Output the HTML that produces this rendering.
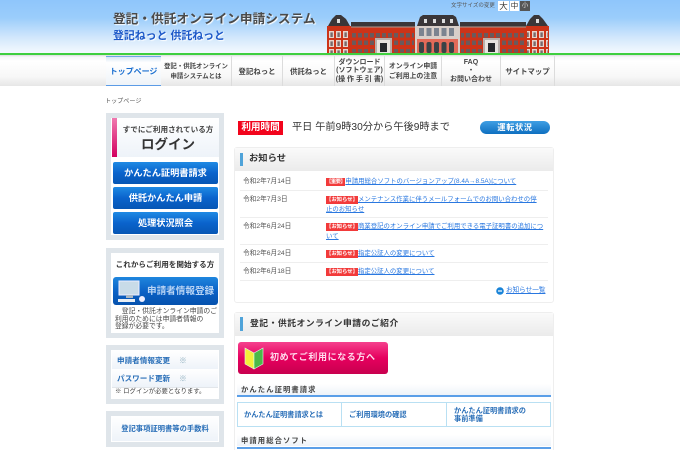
<!DOCTYPE html>
<html lang="ja"><head><meta charset="utf-8"><title>登記・供託オンライン申請システム</title>
<style>
html,body{margin:0;padding:0;width:680px;height:450px;overflow:hidden;background:#fff}
#root{position:absolute;left:0;top:0;width:680px;height:450px;overflow:hidden;filter:blur(.35px);font-family:"Liberation Sans","Noto Sans CJK JP",sans-serif;color:#333}
.a{position:absolute;white-space:nowrap;line-height:1}
.c{text-align:center}
#hdr{position:absolute;left:0;top:0;width:680px;height:53px;background:linear-gradient(#8fc6fb 0,#9bcdfb 18px,#d3e8fc 38px,#f4f9fe 53px)}
#g{position:absolute;left:0;top:53px;width:680px;height:2px;background:#3fcf3f}
#nav{position:absolute;left:0;top:55px;width:680px;height:31px;background:linear-gradient(#dcdcdc 0,#f8f8f8 2px,#fff 6px,#f7f7f7 22px,#e6e6e6 31px)}
.n{position:absolute;top:56px;height:30px;padding-top:1px;display:flex;align-items:center;justify-content:center;text-align:center;font-weight:bold;color:#444;font-size:7.4px;line-height:10px;border-right:1px solid #dcdcdc;box-sizing:border-box;white-space:nowrap}
.box{position:absolute;left:106px;width:118px;box-sizing:border-box;border:5px solid #dfe5ea;background:#fff}
.bb{position:absolute;left:113px;width:105px;height:22px;border-radius:2px;background:linear-gradient(#1f8ae4,#0a63cc 50%,#0656b4);color:#fff;font-weight:bold;font-size:9.2px;line-height:22px;text-align:center;white-space:nowrap}
.panel{position:absolute;left:234px;width:320px;box-sizing:border-box;border:1px solid #eee;border-radius:3px;background:#fff}
.ph{position:absolute;left:235px;width:318px;height:23px;background:linear-gradient(#fafafa,#ebebeb)}
.bar{position:absolute;left:240px;width:3px;background:#4fa3d9}
.d{position:absolute;left:243px;font-size:6.7px;color:#555;line-height:9px;white-space:nowrap}
.l{position:absolute;left:326px;font-size:6.4px;line-height:9px;color:#2a78e0;white-space:nowrap}
.l u{text-decoration:underline}
.l b{color:#fff;background:#f23a3a;font-size:5.35px;font-weight:bold;padding:1px 0}
.hr{position:absolute;left:240px;width:308px;height:1px;background:#eee}
.sh{position:absolute;left:237px;width:314px;height:11px;background:linear-gradient(#fff,#eef3f9);font-weight:bold;font-size:7.3px;letter-spacing:1.1px;color:#444;line-height:11px;padding-left:4px;box-sizing:border-box}
.sl{position:absolute;left:237px;width:314px;height:2px;background:#5b9fe8}
</style></head><body><div id="root">
<div id="hdr"></div>
<svg class="a" style="left:327px;top:12px" width="222" height="42" viewBox="0 0 222 42">
<defs>
<pattern id="w" width="6" height="7.5" patternUnits="userSpaceOnUse" x="1" y="21"><rect width="4" height="4.5" fill="#6a5a5c"/></pattern>
<pattern id="t" width="7" height="9" patternUnits="userSpaceOnUse" x="2" y="19"><rect width="5" height="7" fill="#e8d4cc"/><rect x="1.4" y="1.4" width="2.4" height="4.6" fill="#7a6a6c"/></pattern>
<pattern id="u" width="7.5" height="12" patternUnits="userSpaceOnUse" x="92" y="16"><rect width="5" height="8" fill="#7c8490"/></pattern>
</defs>
<rect x="0" y="14" width="222" height="27" fill="#cc3318"/>
<rect x="24" y="10" width="64" height="4.5" fill="#3a3638"/><rect x="133" y="10" width="66" height="4.5" fill="#3a3638"/>
<rect x="24" y="14.5" width="64" height="1" fill="#b09a90"/><rect x="133" y="14.5" width="66" height="1" fill="#b09a90"/>
<polygon points="1,14 5,7 9,3 14,3 19,7 23,14" fill="#3a3638"/><polygon points="199,14 203,7 207,3 212,3 216,7 221,14" fill="#3a3638"/>
<polygon points="90,14 93,5 96,3 126,3 129,5 132,14" fill="#3a3638"/>
<rect x="25" y="20" width="62" height="15" fill="url(#w)"/><rect x="134" y="20" width="64" height="15" fill="url(#w)"/>
<rect x="25" y="37" width="62" height="3.5" fill="url(#w)"/><rect x="134" y="37" width="64" height="3.5" fill="url(#w)"/>
<rect x="1" y="18" width="22" height="23" fill="url(#t)"/><rect x="200" y="18" width="21" height="23" fill="url(#t)"/>
<rect x="88" y="14" width="45" height="27" fill="#d9cfc9"/>
<rect x="92" y="16" width="37" height="10" fill="url(#u)"/>
<rect x="90" y="27" width="41" height="14" fill="#e26a58"/>
<g fill="#3a4246"><rect x="92" y="30" width="5" height="11" rx="2"/><rect x="99.5" y="30" width="5" height="11" rx="2"/><rect x="107" y="30" width="5" height="11" rx="2"/><rect x="114.500" y="30" width="5" height="11" rx="2"/><rect x="122" y="30" width="5" height="11" rx="2"/></g>
<g fill="#b8b0ac"><rect x="48" y="26" width="17" height="15"/><rect x="156" y="26" width="17" height="15"/></g>
<g fill="#e8e4e0"><rect x="50" y="28" width="13" height="13"/><rect x="158" y="28" width="13" height="13"/></g>
<g fill="#26282c"><rect x="53" y="31" width="7" height="9"/><rect x="161" y="31" width="7" height="9"/></g>
<g fill="#ddd"><rect x="10" y="7" width="3" height="4"/><rect x="209" y="7" width="3" height="4"/><rect x="97" y="7" width="3" height="4"/><rect x="106" y="7" width="3" height="4"/><rect x="115" y="7" width="3" height="4"/><rect x="123" y="7" width="3" height="4"/></g>
</svg>
<div id="g"></div>
<div class="a" style="left:113px;top:13px;font-size:12.7px;color:#4a4a4a;font-weight:bold;text-shadow:1px 1px 1px #fff">登記・供託オンライン申請システム</div>
<div class="a" style="left:113px;top:31px;font-size:10.9px;color:#1c58c8;font-weight:bold;text-shadow:1px 1px 1px #fff">登記ねっと 供託ねっと</div>
<div class="a" style="left:451px;top:4px;font-size:5.5px;color:#555">文字サイズの変更</div>
<div class="a c" style="left:498px;top:1px;width:11px;height:10px;background:#fff;font-size:8.5px;line-height:10px;color:#333">大</div>
<div class="a c" style="left:510px;top:1px;width:9px;height:10px;background:#fff;font-size:7.5px;line-height:10px;color:#333">中</div>
<div class="a c" style="left:520px;top:1px;width:10px;height:10px;background:#555;font-size:6.5px;line-height:10px;color:#ddd">小</div>

<div id="nav"></div>
<div class="n" style="left:106px;width:55px;background:linear-gradient(#d8e6f5,#fff 20%,#eef3f8);border-top:1px solid #6ea6e6;border-bottom:1px solid #5b9be6;border-right:0;color:#1a6fd0;font-size:8px">トップページ</div>
<div class="n" style="left:161px;width:71px;font-size:6.4px">登記・供託オンライン<br>申請システムとは</div>
<div class="n" style="left:232px;width:51px">登記ねっと</div>
<div class="n" style="left:283px;width:52px">供託ねっと</div>
<div class="n" style="left:335px;width:50px;font-size:7px;line-height:8.5px">ダウンロード<br>(ソフトウェア)<br>(操 作 手 引 書)</div>
<div class="n" style="left:385px;width:57px;font-size:6.9px">オンライン申請<br>ご利用上の注意</div>
<div class="n" style="left:442px;width:59px;font-size:7px;line-height:8.5px">FAQ<br>・<br>お問い合わせ</div>
<div class="n" style="left:501px;width:54px">サイトマップ</div>

<div class="a" style="left:105px;top:99px;font-size:6.1px;color:#555">トップページ</div>

<div class="box" style="top:113px;height:127px"></div>
<div class="a" style="left:112px;top:118px;width:5px;height:39px;background:linear-gradient(#f07ab0,#d3005f)"></div>
<div class="a" style="left:117px;top:118px;width:102px;height:39px;background:linear-gradient(#fff,#eef3f9)"></div>
<div class="a c" style="left:117px;top:126px;width:102px;font-size:7.6px;font-weight:bold;color:#444">すでにご利用されている方</div>
<div class="a c" style="left:117px;top:138px;width:102px;font-size:13.5px;font-weight:bold;color:#333">ログイン</div>
<div class="bb" style="top:162px">かんたん証明書請求</div>
<div class="bb" style="top:187px">供託かんたん申請</div>
<div class="bb" style="top:212px">処理状況照会</div>

<div class="box" style="top:248px;height:90px"></div>
<div class="a c" style="left:111px;top:261px;width:108px;font-size:7.6px;font-weight:bold;color:#333">これからご利用を開始する方</div>
<div class="a" style="left:113px;top:277px;width:105px;height:28px;border-radius:3px;background:linear-gradient(#1f86de,#0a5fc4 55%,#0652ad)"></div>
<svg class="a" style="left:118px;top:280px" width="32" height="25" viewBox="0 0 32 25"><rect x="1" y="1" width="20" height="14" fill="#c8dbe8" stroke="#eef" stroke-width="1"/><rect x="8" y="15" width="7" height="3" fill="#aab8c4"/><rect x="0" y="19" width="17" height="3" fill="#e8eef4"/><circle cx="24" cy="19" r="3" fill="#eef"/></svg>
<div class="a" style="left:147px;top:287px;font-size:9.6px;font-weight:bold;color:#b8d4f4">申請者情報登録</div>
<div class="a" style="left:115px;top:308px;font-size:6.8px;line-height:7.6px;color:#444">　登記・供託オンライン申請のご<br>利用のためには申請者情報の<br>登録が必要です。</div>

<div class="box" style="top:345px;height:59px"></div>
<div class="a" style="left:112px;top:351px;width:106px;height:18px;background:linear-gradient(#fff,#eef3f9)"></div>
<div class="a" style="left:112px;top:369px;width:106px;height:18px;background:linear-gradient(#fff,#eef3f9);border-bottom:1px solid #e2e6ea"></div>
<div class="a" style="left:117px;top:357px;font-size:7.6px;font-weight:bold;color:#2a6fb8">申請者情報変更<span style="margin-left:9px;color:#8ab">※</span></div>
<div class="a" style="left:117px;top:375px;font-size:7.6px;font-weight:bold;color:#2a6fb8">パスワード更新<span style="margin-left:9px;color:#8ab">※</span></div>
<div class="a" style="left:115px;top:389px;font-size:6.4px;color:#444">※ ログインが必要となります。</div>

<div class="box" style="top:411px;height:36px"></div>
<div class="a" style="left:112px;top:417px;width:106px;height:24px;background:linear-gradient(#fff,#eef3f9);border:0"></div>
<div class="a c" style="left:112px;top:425px;width:106px;font-size:7.3px;font-weight:bold;color:#2a6fb8">登記事項証明書等の手数料</div>

<div class="a c" style="left:238px;top:121px;width:45px;height:14px;background:#f2041c;color:#fff;font-weight:bold;font-size:9.6px;line-height:14px">利用時間</div>
<div class="a" style="left:292px;top:123px;font-size:10.2px;color:#333">平日 午前9時30分から午後9時まで</div>
<div class="a c" style="left:480px;top:121px;width:70px;height:13px;border-radius:7px;background:linear-gradient(#3f9fe4,#0e6fc0);color:#fff;font-weight:bold;font-size:8.2px;line-height:13px;letter-spacing:.6px">運転状況</div>

<div class="panel" style="top:147px;height:156px"></div>
<div class="ph" style="top:148px"></div>
<div class="bar" style="top:153px;height:13px"></div>
<div class="a" style="left:249px;top:154px;font-size:9.3px;font-weight:bold;color:#333">お知らせ</div>
<div class="d" style="top:177px">令和2年7月14日</div>
<div class="l" style="top:177px"><b style="letter-spacing:-.5px">【重要】</b><u>申請用総合ソフトのバージョンアップ(8.4A→8.5A)について</u></div>
<div class="hr" style="top:190px"></div>
<div class="d" style="top:195px">令和2年7月3日</div>
<div class="l" style="top:195px"><b>【お知らせ】</b><u>メンテナンス作業に伴うメールフォームでのお問い合わせの停<br>止のお知らせ</u></div>
<div class="hr" style="top:217px"></div>
<div class="d" style="top:222px">令和2年6月24日</div>
<div class="l" style="top:222px"><b>【お知らせ】</b><u>商業登記のオンライン申請でご利用できる電子証明書の追加につ<br>いて</u></div>
<div class="hr" style="top:244px"></div>
<div class="d" style="top:249px">令和2年6月24日</div>
<div class="l" style="top:249px"><b>【お知らせ】</b><u>指定公証人の変更について</u></div>
<div class="hr" style="top:262px"></div>
<div class="d" style="top:267px">令和2年6月18日</div>
<div class="l" style="top:267px"><b>【お知らせ】</b><u>指定公証人の変更について</u></div>
<div class="hr" style="top:280px"></div>
<svg class="a" style="left:496px;top:287px" width="8" height="8"><circle cx="4" cy="4" r="3.8" fill="#1a84d8"/><rect x="2" y="3.4" width="4" height="1.2" fill="#fff"/></svg>
<div class="a" style="left:506px;top:288px;font-size:6.6px;color:#2a78e0;text-decoration:underline">お知らせ一覧</div>

<div class="panel" style="top:312px;height:140px"></div>
<div class="ph" style="top:313px"></div>
<div class="bar" style="top:317px;height:14px"></div>
<div class="a" style="left:250px;top:319px;font-size:8.8px;font-weight:bold;letter-spacing:.5px;color:#333">登記・供託オンライン申請のご紹介</div>
<div class="a" style="left:238px;top:342px;width:150px;height:32px;border-radius:3px;background:linear-gradient(#f5418d,#e6005e 50%,#c8004f)"></div>
<svg class="a" style="left:244px;top:346px" width="20" height="24" viewBox="0 0 20 24"><polygon points="1,2 10,7 10,23 1,18" fill="#f4ee3a" stroke="#dfe" stroke-width=".6"/><polygon points="19,2 10,7 10,23 19,18" fill="#4cb848" stroke="#dfe" stroke-width=".6"/></svg>
<div class="a" style="left:270px;top:353px;font-size:9px;font-weight:bold;letter-spacing:.6px;color:#fde">初めてご利用になる方へ</div>
<div class="sh" style="top:384px">かんたん証明書請求</div>
<div class="sl" style="top:395px"></div>
<div class="a" style="left:237px;top:402px;width:314px;height:25px;box-sizing:border-box;border:1px solid #b9e0f3;background:#fff"></div>
<div class="a" style="left:341px;top:402px;width:1px;height:25px;background:#b9e0f3"></div>
<div class="a" style="left:446px;top:402px;width:1px;height:25px;background:#b9e0f3"></div>
<div class="a" style="left:244px;top:411px;font-size:7.2px;color:#2a6fb8;font-weight:bold">かんたん証明書請求とは</div>
<div class="a" style="left:349px;top:411px;font-size:7.2px;color:#2a6fb8;font-weight:bold">ご利用環境の確認</div>
<div class="a" style="left:454px;top:407px;font-size:7.2px;line-height:7.6px;color:#2a6fb8;font-weight:bold">かんたん証明書請求の<br>事前準備</div>
<div class="sh" style="top:435px">申請用総合ソフト</div>
<div class="sl" style="top:447px"></div>
</div></body></html>
